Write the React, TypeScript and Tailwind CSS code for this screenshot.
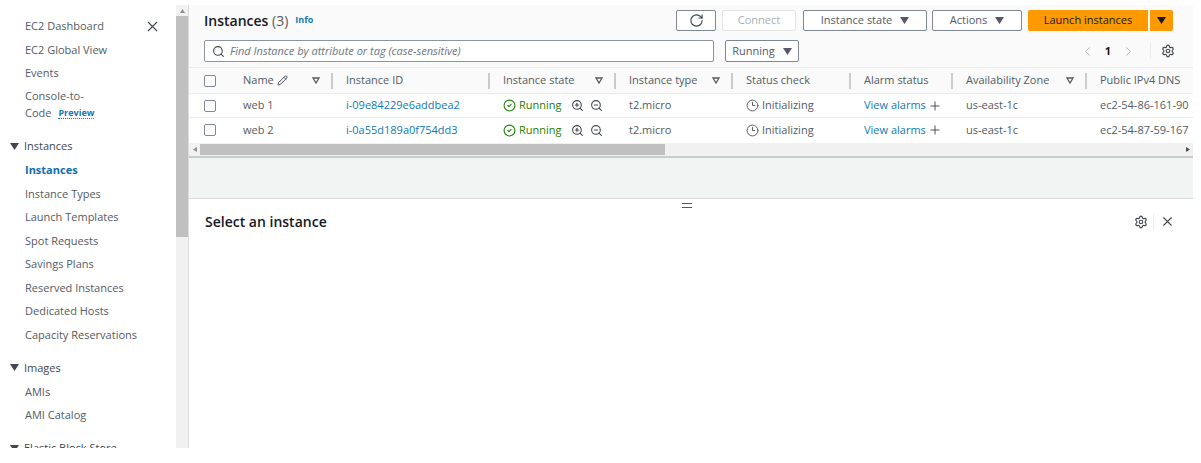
import { ChevronLeft, ChevronRight, Search, Settings, X, Plus, RotateCw, ZoomIn, ZoomOut, CircleCheck, Clock3, Pencil } from "lucide-react";

const Tri = ({ className = "" }: { className?: string }) => (
  <svg width="9" height="7" viewBox="0 0 9 7" className={className}><path d="M0 0h9L4.5 7z" fill="currentColor" /></svg>
);
const FilterTri = () => (
  <svg width="8" height="7" viewBox="0 0 8 7" className="text-[#545b64]"><path d="M1 1h6L4 6z" fill="none" stroke="currentColor" strokeWidth="1.3" /></svg>
);
const Gear = ({ className = "" }: { className?: string }) => <Settings size={14} strokeWidth={2} className={className} />;

const Nav = ({ children, active }: { children: React.ReactNode; active?: boolean }) => (
  <div className={`h-[23.5px] leading-[23.5px] pl-[25px] ${active ? "text-[#0f6fa8] font-bold" : ""}`}>{children}</div>
);
const Section = ({ children, mt }: { children: React.ReactNode; mt: string }) => (
  <div className={`h-[23.5px] flex items-center gap-[5px] pl-[10px] text-[#414750] font-medium ${mt}`}>
    <Tri className="text-[#414750]" />
    <span>{children}</span>
  </div>
);
const cols = "grid grid-cols-[54px_103px_157px_126px_117px_118px_102px_134px_106px]";
const Sep = () => <span className="w-[2px] h-[16px] bg-[#c9cccf] shrink-0" />;

const Head = ({ label, filter }: { label: React.ReactNode; filter?: boolean }) => (
  <div className="flex items-center pr-[13px] min-w-0">
    <span className="flex items-center gap-[3px] whitespace-nowrap font-medium text-[#545b64]">{label}</span>
    <span className="flex-1" />
    {filter && <span className="mr-[11px] flex"><FilterTri /></span>}
    <Sep />
  </div>
);
const Check = () => <span className="w-[12px] h-[12px] rounded-[2px] border border-[#7d8998] bg-white ml-[15px]" />;

const Row = ({ name, id, dns, top }: { name: string; id: string; dns: string; top: string }) => (
  <div className={`${cols} ${top} items-center bg-white text-[#545b64] whitespace-nowrap`}>
    <div className="flex items-center"><Check /></div>
    <div>{name}</div>
    <div className="text-[#0f7ab8]">{id}</div>
    <div className="flex items-center">
      <CircleCheck size={13} strokeWidth={2} className="text-[#1d8102]" />
      <span className="ml-[3px] text-[#1d8102]">Running</span>
      <ZoomIn size={13} strokeWidth={2} className="ml-[9px] text-[#414750]" />
      <ZoomOut size={13} strokeWidth={2} className="ml-[6px] text-[#414750]" />
    </div>
    <div>t2.micro</div>
    <div className="flex items-center">
      <Clock3 size={13} strokeWidth={1.8} className="text-[#545b64]" />
      <span className="ml-[3px]">Initializing</span>
    </div>
    <div className="flex items-center">
      <span className="text-[#0f7ab8]">View alarms</span>
      <Plus size={14} strokeWidth={1.6} className="ml-[2px] text-[#414750]" />
    </div>
    <div>us-east-1c</div>
    <div className="overflow-hidden">{dns}</div>
  </div>
);

const Btn = ({ children, className = "" }: { children: React.ReactNode; className?: string }) => (
  <div className={`h-[21px] flex items-center justify-center rounded-[2px] border border-[#7f8790] bg-white font-medium text-[#545b64] ${className}`}>{children}</div>
);

export default function App() {
  return (
    <div className="w-[1201px] h-[463px] bg-white overflow-hidden text-[11px] text-[#545b64]" style={{ fontFamily: '"Open Sans", "Noto Sans", sans-serif' }}>
      <div className="w-[1193px] h-[448px] flex overflow-hidden">
        <aside className="w-[176px] shrink-0 pt-[14px] relative overflow-hidden">
          <X size={17} strokeWidth={1.6} className="absolute left-[144px] top-[18px] text-[#414750]" />
          <Nav>EC2 Dashboard</Nav>
          <Nav>EC2 Global View</Nav>
          <Nav>Events</Nav>
          <div className="pl-[25px] leading-[17.5px] pt-[2px] h-[41px]">
            <div>Console-to-</div>
            <div className="flex items-center gap-[7px]">Code <span className="text-[9px] font-bold text-[#0f7ab8] border-b border-dotted border-[#0f7ab8] leading-[11px]">Preview</span></div>
          </div>
          <Section mt="mt-[9px]">Instances</Section>
          <Nav active>Instances</Nav>
          <Nav>Instance Types</Nav>
          <Nav>Launch Templates</Nav>
          <Nav>Spot Requests</Nav>
          <Nav>Savings Plans</Nav>
          <Nav>Reserved Instances</Nav>
          <Nav>Dedicated Hosts</Nav>
          <Nav>Capacity Reservations</Nav>
          <Section mt="mt-[10px]">Images</Section>
          <Nav>AMIs</Nav>
          <Nav>AMI Catalog</Nav>
          <Section mt="mt-[10px]">Elastic Block Store</Section>
        </aside>

        <div className="w-[12px] shrink-0 mt-[5px] bg-[#f1f1f1] flex flex-col">
          <div className="h-[11px] flex items-center justify-center"><svg width="5" height="4" viewBox="0 0 5 4"><path d="M2.5 0L5 4H0z" fill="#8f8f8f" /></svg></div>
          <div className="h-[221px] bg-[#c0c0c0]" />
        </div>
        <div className="w-[1px] shrink-0 bg-[#dcdcdc] mt-[5px]" />

        <main className="flex-1 min-w-0 mt-[5px] flex flex-col overflow-hidden">
          <div className="bg-[#fafafa] h-[62px] flex flex-col shrink-0">
            <div className="h-[30px] flex items-center pl-[15px]">
              <span className="text-[14px] font-semibold text-[#16191f]">Instances <span className="font-normal text-[#545b64]">(3)</span></span>
              <span className="ml-[7px] text-[9px] font-bold text-[#0f7ab8]">Info</span>
              <span className="flex-1" />
              <Btn className="w-[40px]"><RotateCw size={15} strokeWidth={1.8} className="text-[#414750]" /></Btn>
              <div className="ml-[6px] w-[74px] h-[21px] flex items-center justify-center border border-[#e5e5e5] rounded-[2px] bg-white text-[#a9b0b7] font-medium">Connect</div>
              <Btn className="ml-[7px] w-[124px] gap-[8px]">Instance state <Tri /></Btn>
              <Btn className="ml-[5px] w-[90px] gap-[8px]">Actions <Tri /></Btn>
              <div className="ml-[6px] w-[120px] h-[21px] bg-[#ff9900] rounded-l-[2px] flex items-center justify-center font-medium text-[#16191f]">Launch instances</div>
              <div className="ml-[2px] w-[23px] h-[21px] bg-[#ff9900] rounded-r-[2px] flex items-center justify-center text-[#16191f]"><Tri /></div>
              <span className="w-[20px]" />
            </div>
            <div className="h-[32px] flex items-center pl-[15px]">
              <div className="w-[510px] h-[22px] border border-[#8d949c] rounded-[2px] bg-white flex items-center pl-[7px] gap-[5px]">
                <Search size={13} strokeWidth={2} className="text-[#414750]" />
                <span className="italic text-[#6b7480]">Find Instance by attribute or tag (case-sensitive)</span>
              </div>
              <Btn className="ml-[11px] w-[74px] gap-[8px] h-[22px] font-normal">Running <Tri /></Btn>
              <span className="flex-1" />
              <ChevronLeft size={15} strokeWidth={1.5} className="text-[#a9b0b7]" />
              <span className="ml-[10px] font-bold text-[#16191f]">1</span>
              <ChevronRight size={15} strokeWidth={1.5} className="ml-[10px] text-[#a9b0b7]" />
              <span className="ml-[14px] w-[1px] h-[16px] bg-[#eaeded]" />
              <Gear className="ml-[10px] text-[#414750]" />
              <span className="w-[18px]" />
            </div>
          </div>
          <div className={`${cols} h-[26px] items-center bg-[#fafafa] border-t border-[#eaeded] shrink-0`}>
            <div className="flex items-center"><Check /></div>
            <Head label={<>Name <Pencil size={11} strokeWidth={2} className="text-[#414750]" /></>} filter />
            <Head label="Instance ID" />
            <Head label="Instance state" filter />
            <Head label="Instance type" filter />
            <Head label="Status check" />
            <Head label="Alarm status" />
            <Head label="Availability Zone" filter />
            <div className="font-medium text-[#545b64] whitespace-nowrap">Public IPv4 DNS</div>
          </div>
          <Row name="web 1" id="i-09e84229e6addbea2" dns="ec2-54-86-161-90" top="h-[24px] border-t border-[#eaeded]" />
          <Row name="web 2" id="i-0a55d189a0f754dd3" dns="ec2-54-87-59-167" top="h-[25px] border-t border-[#eaeded]" />
          <div className="h-[13px] mt-[1px] bg-[#f1f1f1] flex items-center shrink-0">
            <div className="w-[11px] flex justify-center"><svg width="4" height="5" viewBox="0 0 4 5"><path d="M0 2.5L4 0v5z" fill="#8f8f8f" /></svg></div>
            <div className="w-[465px] h-[11px] bg-[#c0c0c0]" />
            <span className="flex-1" />
            <div className="w-[11px] flex justify-center"><svg width="4" height="5" viewBox="0 0 4 5"><path d="M4 2.5L0 0v5z" fill="#505050" /></svg></div>
          </div>
          <div className="h-[42px] bg-[#f2f3f3] border-t-2 border-[#c9cccf] shrink-0" />
          <div className="flex-1 bg-white border-t border-[#dcdfe0] relative">
            <div className="flex justify-center -ml-[8px] pt-[4px] h-[9px]">
              <div className="w-[10px] h-[5px] border-y-[1.5px] border-[#545b64]" />
            </div>
            <div className="flex items-center pl-[16px] pt-[3px] h-[24px]">
              <span className="text-[14px] font-semibold text-[#16191f]">Select an instance</span>
              <span className="flex-1" />
              <Gear className="text-[#414750]" />
              <span className="ml-[5px] w-[1px] h-[16px] bg-[#eaeded]" />
              <X size={15} strokeWidth={1.8} className="ml-[6px] text-[#414750]" />
              <span className="w-[18px]" />
            </div>
          </div>
        </main>
      </div>
    </div>
  );
}
